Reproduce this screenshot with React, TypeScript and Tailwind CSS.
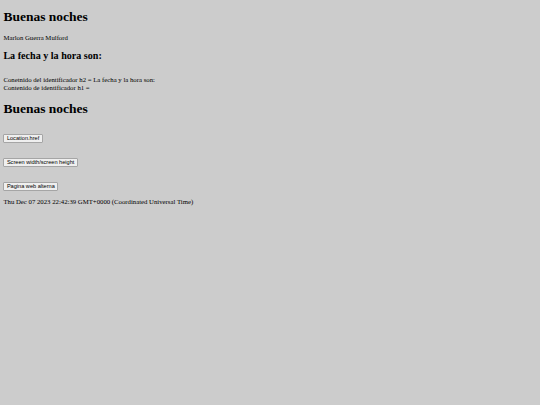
export default function App() {
  const serif = "font-['Liberation_Serif','Times_New_Roman',serif]";
  const btn =
    "block h-[9px] px-[2.5px] border border-[#a5a5a5] rounded-[1px] bg-[#efefef] text-[5.6px] leading-[7px] text-black font-['Liberation_Sans',Arial,sans-serif]";
  return (
    <div className={`min-h-[405px] w-[540px] bg-[#cccccc] px-[3.4px] py-px text-black ${serif}`}>
      <h1 className="mt-[8px] text-[13.5px] leading-[15.5px] font-bold">Buenas noches</h1>
      <p className="mt-[9px] text-[6.75px] leading-[7.7px]">Marlon Guerra Mulford</p>
      <h2 className="mt-[8.4px] text-[10.1px] leading-[11.6px] font-bold">La fecha y la hora son:</h2>
      <p className="mt-[15.1px] text-[6.75px] leading-[7.7px]">
        Conetnido del identificador h2 = La fecha y la hora son:
        <br />
        Contenido de identificador h1 =
      </p>
      <h1 className="mt-[9px] text-[13.5px] leading-[15.5px] font-bold">Buenas noches</h1>
      <div className="mt-[18.3px] flex flex-col items-start gap-[15px]">
        <button className={btn}>Location.href</button>
        <button className={btn}>Screen width/screen height</button>
        <button className={btn}>Pagina web alterna</button>
      </div>
      <p className="mt-[6.8px] text-[6.75px] leading-[7.7px]">
        Thu Dec 07 2023 22:42:39 GMT+0000 (Coordinated Universal Time)
      </p>
    </div>
  );
}
